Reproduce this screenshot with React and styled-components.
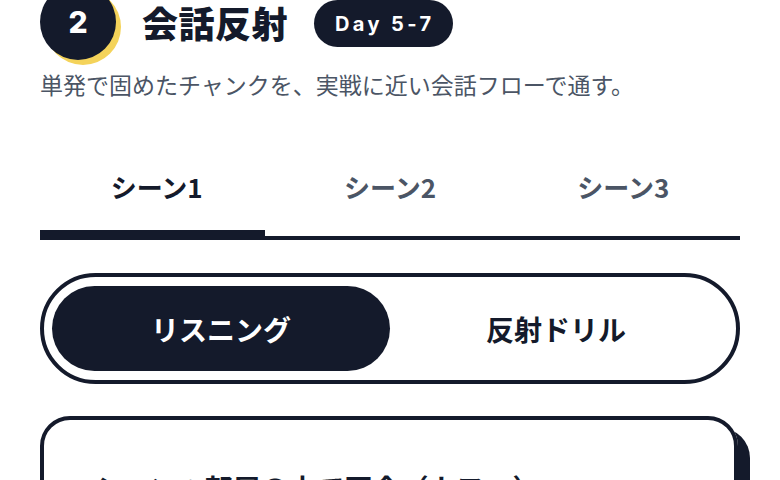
import React from "react";
import styled, { createGlobalStyle } from "styled-components";

const INK = "#141a2b";
const GRAY = "#4b5565";

const Global = createGlobalStyle`
  html, body { margin: 0; padding: 0; background: #ffffff; }
  body { font-family: Inter, "Noto Sans CJK JP", sans-serif; color: ${INK}; overflow: hidden; }
  * { box-sizing: border-box; }
`;

const Page = styled.div`
  padding: 0 40px;
  display: flex;
  flex-direction: column;
`;

const Header = styled.div`
  display: flex;
  align-items: center;
  height: 76px;
  margin-top: -16px;
`;

const StepBadge = styled.div`
  width: 76px;
  height: 76px;
  border-radius: 50%;
  background: ${INK};
  box-shadow: 5px 5px 0 #f4d35a;
  display: flex;
  align-items: center;
  justify-content: center;
  color: #fff;
  font-family: Inter, sans-serif;
  font-weight: 800;
  font-size: 30px;
  flex: none;
`;

const Title = styled.h1`
  margin: 0 0 0 26px;
  font-family: "Noto Sans CJK JP", sans-serif;
  font-weight: 900;
  font-size: 36px;
  line-height: 1;
  letter-spacing: 0.5px;
`;

const DayPill = styled.span`
  margin-left: 26px;
  height: 47px;
  padding: 0 18px 0 21px;
  border-radius: 24px;
  background: ${INK};
  color: #fff;
  display: inline-flex;
  align-items: center;
  font-family: Inter, sans-serif;
  font-weight: 700;
  font-size: 20px;
  letter-spacing: 3.4px;
  align-self: flex-start;
  margin-top: 16px;
`;

const Subtitle = styled.p`
  margin: 9px 0 0;
  font-family: "Noto Sans CJK JP", sans-serif;
  font-size: 23px;
  line-height: 30px;
  color: ${GRAY};
`;

const TabList = styled.div`
  margin-top: 44px;
  display: grid;
  grid-template-columns: repeat(3, 1fr);
  border-bottom: 4px solid ${INK};
`;

const Tab = styled.div`
  position: relative;
  padding: 29px 0 34px;
  text-align: center;
  font-family: "Noto Sans CJK JP", sans-serif;
  font-weight: 700;
  font-size: 26px;
  line-height: 30px;
  color: ${(p) => (p.$active ? INK : GRAY)};
  &::after {
    content: "";
    display: ${(p) => (p.$active ? "block" : "none")};
    position: absolute;
    left: 0;
    width: 225px;
    bottom: -4px;
    height: 10px;
    background: ${INK};
  }
`;

const Segment = styled.div`
  margin-top: 33px;
  height: 111px;
  border: 4px solid ${INK};
  border-radius: 56px;
  padding: 9px 8px;
  display: grid;
  grid-template-columns: 1fr 1fr;
`;

const SegButton = styled.div`
  border-radius: 45px;
  display: flex;
  align-items: center;
  justify-content: center;
  background: ${(p) => (p.$active ? INK : "transparent")};
  color: ${(p) => (p.$active ? "#fff" : INK)};
  font-family: "Noto Sans CJK JP", sans-serif;
  font-weight: 700;
  font-size: 28px;
  padding-right: ${(p) => (p.$active ? "0" : "6px")};
`;

const Card = styled.div`
  margin-top: 32px;
  margin-right: 2px;
  border: 4px solid ${INK};
  border-radius: 30px;
  box-shadow: 12px 12px 0 ${INK};
  padding: 50px 50px 40px;
  height: 240px;
`;

const CardTitle = styled.div`
  font-family: "Noto Sans CJK JP", sans-serif;
  font-weight: 700;
  font-size: 28px;
  line-height: 36px;
`;

export default function App() {
  return (
    <>
      <Global />
      <Page>
        <Header>
          <StepBadge>2</StepBadge>
          <Title>会話反射</Title>
          <DayPill>Day 5-7</DayPill>
        </Header>
        <Subtitle>単発で固めたチャンクを、実戦に近い会話フローで通す。</Subtitle>
        <TabList>
          <Tab $active>シーン1</Tab>
          <Tab>シーン2</Tab>
          <Tab>シーン3</Tab>
        </TabList>
        <Segment>
          <SegButton $active>リスニング</SegButton>
          <SegButton>反射ドリル</SegButton>
        </Segment>
        <Card>
          <CardTitle>シーン：部屋の中で再会（カフェ）</CardTitle>
        </Card>
      </Page>
    </>
  );
}
